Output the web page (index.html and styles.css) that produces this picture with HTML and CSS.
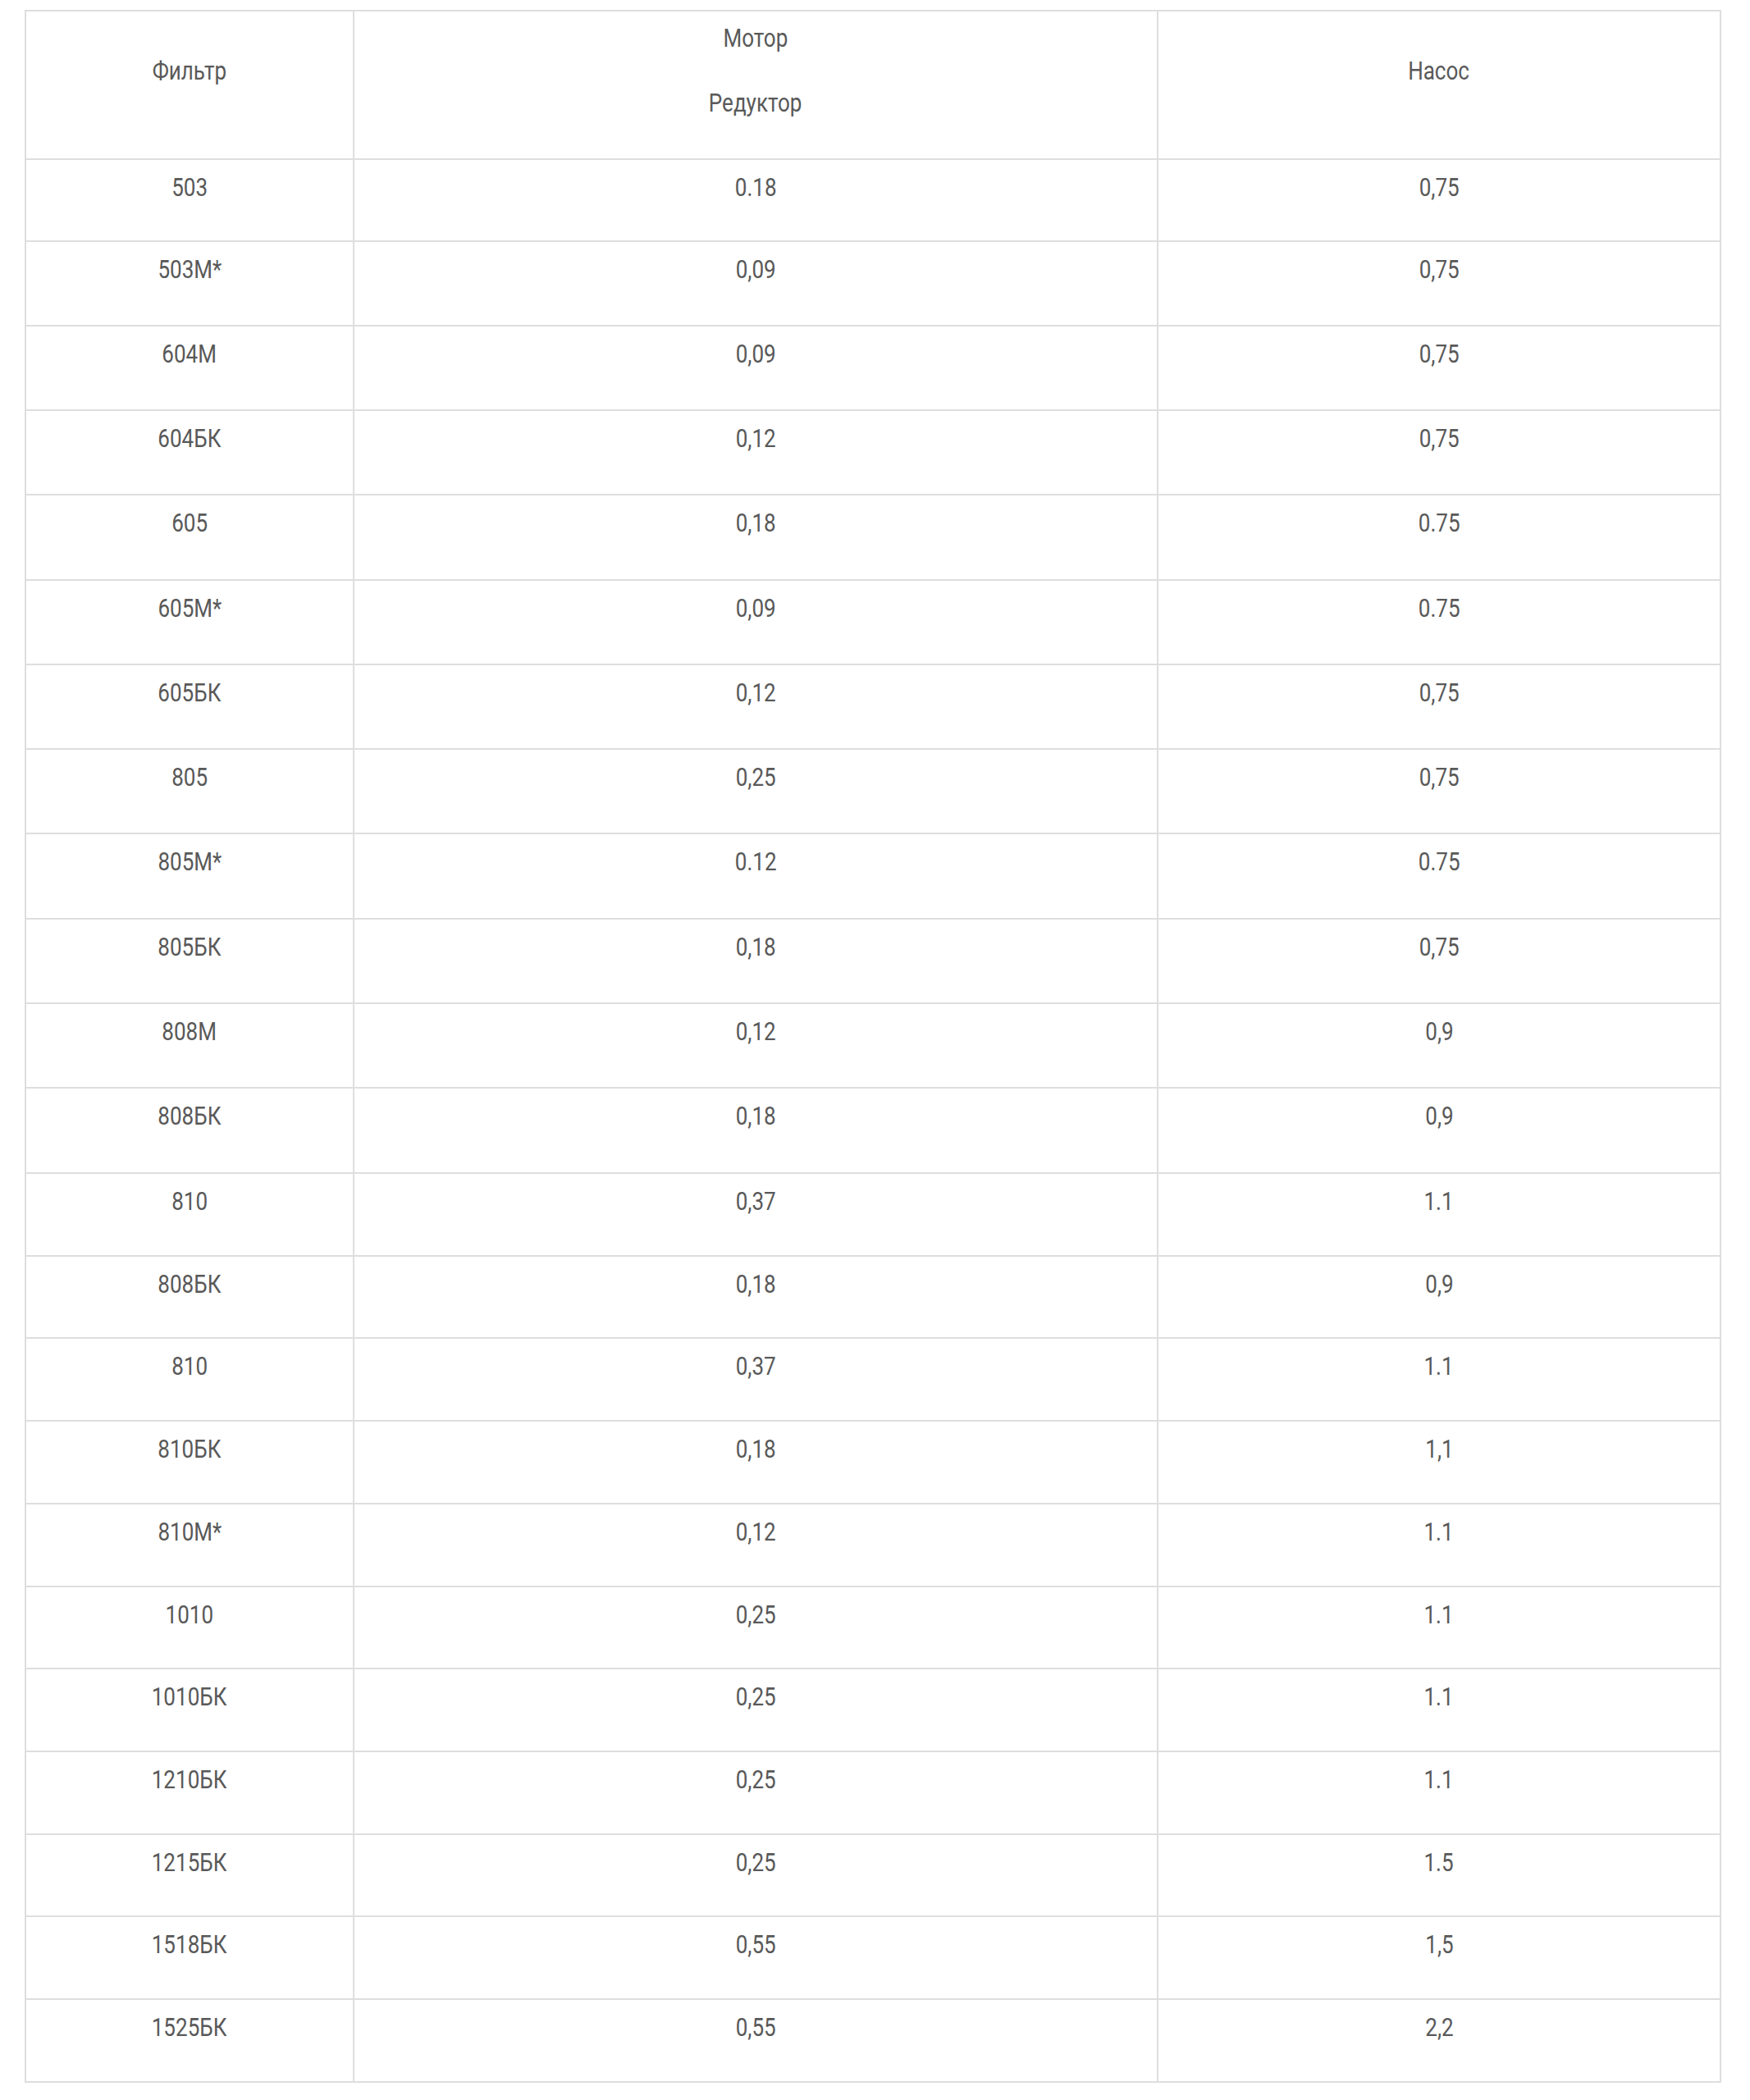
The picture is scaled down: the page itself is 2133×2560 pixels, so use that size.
FILE: index.html
```html
<!DOCTYPE html>
<html lang="ru">
<head>
<meta charset="utf-8">
<title>Таблица</title>
<link rel="stylesheet" href="styles.css">
</head>
<body>
<div class="page">
<table class="spec">
<colgroup><col class="c1"><col class="c2"><col class="c3"></colgroup>
<thead>
<tr class="head"><th><span class="t">Фильтр</span></th><th><p class="gap"><span class="t">Мотор</span></p><p><span class="t">Редуктор</span></p></th><th><span class="t">Насос</span></th></tr>
</thead>
<tbody>
<tr class="r-s"><td><span class="t">503</span></td><td><span class="t">0.18</span></td><td><span class="t">0,75</span></td></tr>
<tr class="r-l"><td><span class="t">503М*</span></td><td><span class="t">0,09</span></td><td><span class="t">0,75</span></td></tr>
<tr class="r-l"><td><span class="t">604М</span></td><td><span class="t">0,09</span></td><td><span class="t">0,75</span></td></tr>
<tr class="r-l"><td><span class="t">604БК</span></td><td><span class="t">0,12</span></td><td><span class="t">0,75</span></td></tr>
<tr class="r-x"><td><span class="t">605</span></td><td><span class="t">0,18</span></td><td><span class="t">0.75</span></td></tr>
<tr class="r-l"><td><span class="t">605М*</span></td><td><span class="t">0,09</span></td><td><span class="t">0.75</span></td></tr>
<tr class="r-l"><td><span class="t">605БК</span></td><td><span class="t">0,12</span></td><td><span class="t">0,75</span></td></tr>
<tr class="r-l"><td><span class="t">805</span></td><td><span class="t">0,25</span></td><td><span class="t">0,75</span></td></tr>
<tr class="r-x"><td><span class="t">805М*</span></td><td><span class="t">0.12</span></td><td><span class="t">0.75</span></td></tr>
<tr class="r-l"><td><span class="t">805БК</span></td><td><span class="t">0,18</span></td><td><span class="t">0,75</span></td></tr>
<tr class="r-l"><td><span class="t">808М</span></td><td><span class="t">0,12</span></td><td><span class="t">0,9</span></td></tr>
<tr class="r-x"><td><span class="t">808БК</span></td><td><span class="t">0,18</span></td><td><span class="t">0,9</span></td></tr>
<tr class="r-m"><td><span class="t">810</span></td><td><span class="t">0,37</span></td><td><span class="t">1.1</span></td></tr>
<tr class="r-s"><td><span class="t">808БК</span></td><td><span class="t">0,18</span></td><td><span class="t">0,9</span></td></tr>
<tr class="r-m"><td><span class="t">810</span></td><td><span class="t">0,37</span></td><td><span class="t">1.1</span></td></tr>
<tr class="r-m"><td><span class="t">810БК</span></td><td><span class="t">0,18</span></td><td><span class="t">1,1</span></td></tr>
<tr class="r-m"><td><span class="t">810М*</span></td><td><span class="t">0,12</span></td><td><span class="t">1.1</span></td></tr>
<tr class="r-s"><td><span class="t">1010</span></td><td><span class="t">0,25</span></td><td><span class="t">1.1</span></td></tr>
<tr class="r-m"><td><span class="t">1010БК</span></td><td><span class="t">0,25</span></td><td><span class="t">1.1</span></td></tr>
<tr class="r-m"><td><span class="t">1210БК</span></td><td><span class="t">0,25</span></td><td><span class="t">1.1</span></td></tr>
<tr class="r-s"><td><span class="t">1215БК</span></td><td><span class="t">0,25</span></td><td><span class="t">1.5</span></td></tr>
<tr class="r-m"><td><span class="t">1518БК</span></td><td><span class="t">0,55</span></td><td><span class="t">1,5</span></td></tr>
<tr class="r-m"><td><span class="t">1525БК</span></td><td><span class="t">0,55</span></td><td><span class="t">2,2</span></td></tr>
</tbody>
</table>
</div>
</body>
</html>
```

FILE: styles.css
```css
html, body {
  margin: 0;
  padding: 0;
  background: #ffffff;
}

.page {
  padding: 12px 36px 0 30px;
}

.spec {
  width: 2066px;
  border-collapse: collapse;
  table-layout: fixed;
  font-family: "Roboto", "Liberation Sans", sans-serif;
  font-size: 31px;
  line-height: 40px;
  color: #595959;
}

.c1 { width: 400px; }
.c2 { width: 980px; }
.c3 { width: 686px; }

.spec th,
.spec td {
  border: 2px solid #dedede;
  text-align: center;
  font-weight: normal;
  padding: 14px 10px 0;
}

.spec th {
  vertical-align: middle;
  padding-top: 13px;
  padding-bottom: 47px;
}

.spec td {
  vertical-align: top;
}

.spec p {
  margin: 0;
}

.spec p.gap {
  margin-bottom: 39px;
}

.t {
  display: inline-block;
  transform: scaleX(0.84);
  transform-origin: center center;
}

.r-s td { padding-bottom: 44px; }
.r-m td { padding-bottom: 45px; }
.r-l td { padding-bottom: 47px; }
.r-x td { padding-bottom: 48px; }
```
